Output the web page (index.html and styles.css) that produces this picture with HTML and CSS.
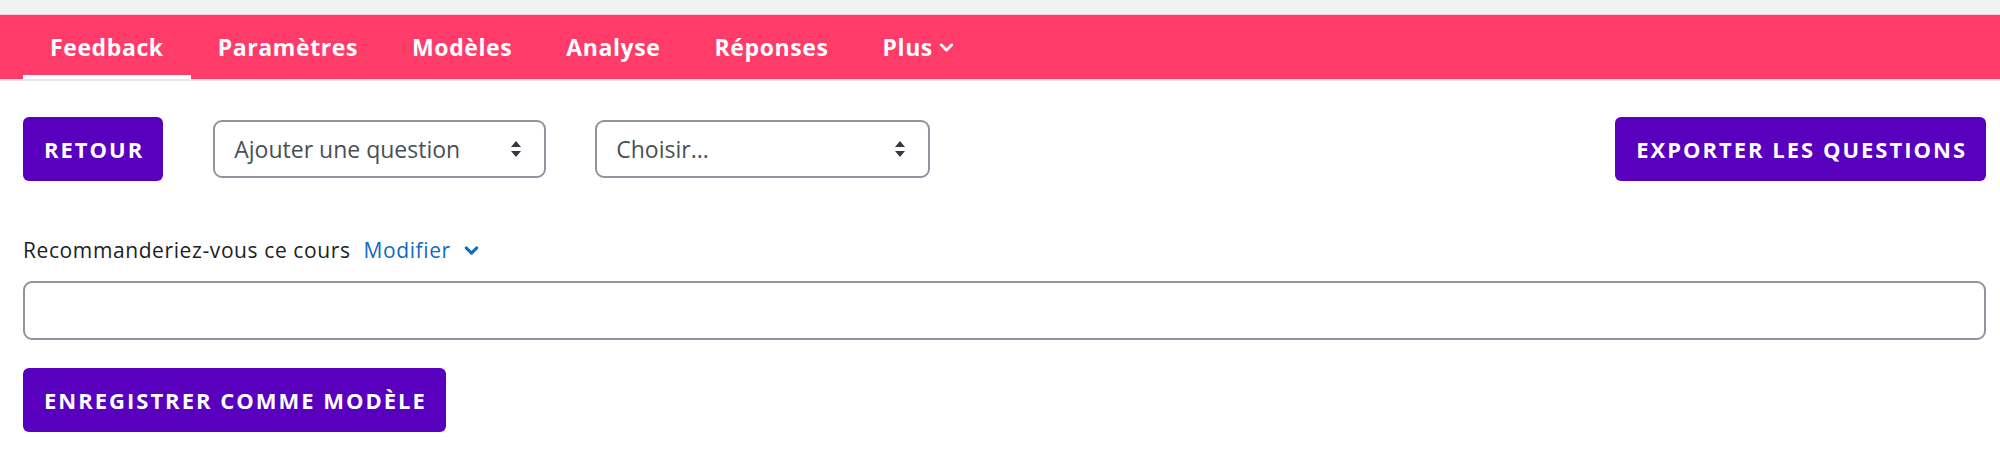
FILE: index.html
```html
<!DOCTYPE html>
<html lang="fr">
<head>
<meta charset="utf-8">
<title>Feedback</title>
<link rel="stylesheet" href="styles.css">
</head>
<body>
<div class="topstrip"></div>
<nav class="tabs">
  <a class="tab active" href="#">Feedback</a>
  <a class="tab" href="#">Paramètres</a>
  <a class="tab" href="#">Modèles</a>
  <a class="tab" href="#">Analyse</a>
  <a class="tab" href="#">Réponses</a>
  <a class="tab" href="#">Plus <svg class="chev" viewBox="0 0 16 16" width="17" height="17"><path d="M3 5.5 L8 10.5 L13 5.5" fill="none" stroke="#fff" stroke-width="2.6" stroke-linecap="round" stroke-linejoin="round"/></svg></a>
</nav>
<main class="content">
  <div class="toolbar">
    <button class="btn">RETOUR</button>
    <div class="select s1"><span>Ajouter une question</span><svg class="updown" viewBox="0 0 12 18" width="12" height="18"><path d="M6 1 L11 7 L1 7 Z M1 11 L11 11 L6 17 Z" fill="#343a40"/></svg></div>
    <div class="select s2"><span>Choisir...</span><svg class="updown" viewBox="0 0 12 18" width="12" height="18"><path d="M6 1 L11 7 L1 7 Z M1 11 L11 11 L6 17 Z" fill="#343a40"/></svg></div>
    <div class="spacer"></div>
    <button class="btn">EXPORTER LES QUESTIONS</button>
  </div>
  <div class="qlabel">
    <span>Recommanderiez-vous ce cours</span>
    <a class="edit" href="#">Modifier</a>
    <svg class="chev2" viewBox="0 0 16 16" width="17" height="17"><path d="M3 5.5 L8 10.5 L13 5.5" fill="none" stroke="#0f6cbf" stroke-width="2.8" stroke-linecap="round" stroke-linejoin="round"/></svg>
  </div>
  <div class="textbox"></div>
  <div class="actions">
    <button class="btn">ENREGISTRER COMME MODÈLE</button>
  </div>
</main>
</body>
</html>
```
FILE: styles.css
```css
* { box-sizing: border-box; }
html, body { margin: 0; padding: 0; background: #fff; }
body { font-family: "Open Sans", "Noto Sans", Arial, sans-serif; color: #1d2125; }

.topstrip { height: 15px; background: #f2f2f2; border-bottom: 1px solid #f4cfd8; }

.tabs {
  display: flex;
  align-items: stretch;
  height: 66px;
  background: #ff3b69;
  padding-left: 23px;
  border-bottom: 2px solid #e3e6ea;
}
.tab {
  display: flex;
  align-items: center;
  gap: 5px;
  padding: 0 27px;
  color: #fff;
  text-decoration: none;
  font-weight: 700;
  font-size: 23px;
  letter-spacing: 0.6px;
  border-bottom: 4px solid transparent;
  padding-top: 3px;
}
.tab.active { border-bottom-color: #fff; }
.chev { margin-top: 2px; }

.content { padding: 35px 14px 0 23px; }

.toolbar { display: flex; align-items: center; height: 65px; }
.spacer { flex: 1; }

.btn {
  height: 64px;
  border: 0;
  border-radius: 6px;
  background: #5900bf;
  color: #fff;
  font-family: "Open Sans", "Noto Sans", Arial, sans-serif;
  font-weight: 700;
  font-size: 22px;
  letter-spacing: 2px;
  padding: 0 19px 0 21px;
}

.select {
  display: flex;
  align-items: center;
  justify-content: space-between;
  height: 58px;
  border: 2px solid #8f959e;
  border-radius: 9px;
  padding: 0 22px 0 19px;
  font-size: 23px;
  color: #495057;
}
.s1 { width: 333px; margin-left: 50px; }
.s2 { width: 335px; margin-left: 49px; }

.qlabel {
  display: flex;
  align-items: center;
  height: 30px;
  margin-top: 54px;
  font-size: 21px;
  letter-spacing: 0.6px;
  color: #1d2125;
}
.edit { color: #0f6cbf; text-decoration: none; margin-left: 13px; }
.chev2 { margin-left: 12px; }

.textbox {
  margin-top: 16px;
  height: 59px;
  border: 2px solid #8f959e;
  border-radius: 9px;
}

.actions { margin-top: 28px; }
```
